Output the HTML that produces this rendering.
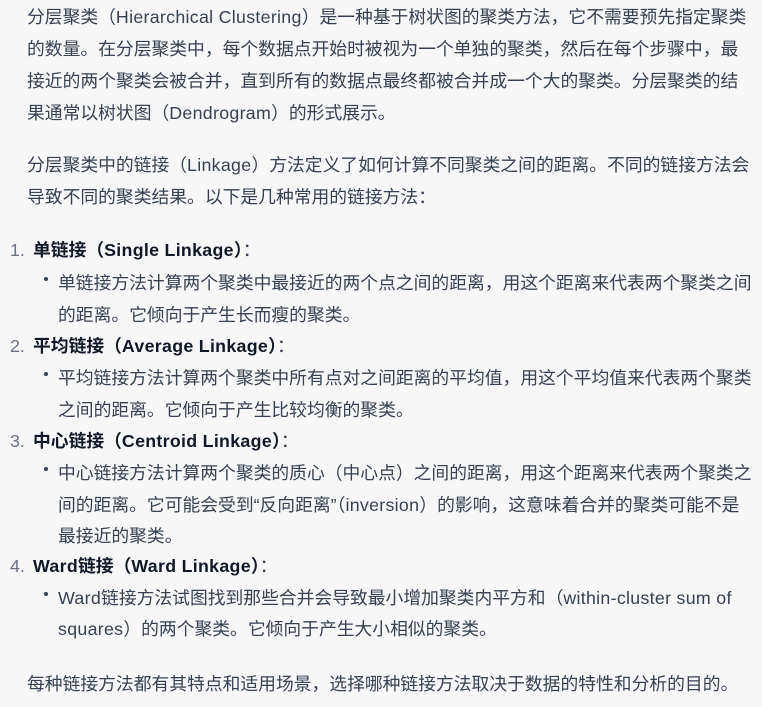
<!DOCTYPE html>
<html><head><meta charset="utf-8"><style>
html,body{margin:0;padding:0;background:#f7f7f8;}
body{width:762px;height:707px;position:relative;overflow:hidden;font-family:"Liberation Sans","Noto Sans CJK SC",sans-serif;font-size:17.8px;color:#374151;}
.l{position:absolute;white-space:nowrap;line-height:22px;}
b{font-weight:700;color:#111827;}
.n{color:#6b7280;}
.e{letter-spacing:0.3px;}
.d{position:absolute;width:4px;height:4px;border-radius:50%;background:#374151;}
</style></head><body>
<div class="l" style="left:27px;top:6px">分层聚类（<span class="e">Hierarchical Clustering</span>）是一种基于树状图的聚类方法，它不需要预先指定聚类</div>
<div class="l" style="left:27px;top:38px">的数量。在分层聚类中，每个数据点开始时被视为一个单独的聚类，然后在每个步骤中，最</div>
<div class="l" style="left:27px;top:70px">接近的两个聚类会被合并，直到所有的数据点最终都被合并成一个大的聚类。分层聚类的结</div>
<div class="l" style="left:27px;top:102px">果通常以树状图（<span class="e">Dendrogram</span>）的形式展示。</div>
<div class="l" style="left:27px;top:154px">分层聚类中的链接（<span class="e">Linkage</span>）方法定义了如何计算不同聚类之间的距离。不同的链接方法会</div>
<div class="l" style="left:27px;top:186px">导致不同的聚类结果。以下是几种常用的链接方法：</div>

<div class="l n" style="left:10px;top:239px">1.</div>
<div class="l" style="left:33px;top:239px"><b>单链接（<span class="e">Single Linkage</span>）</b>：</div>
<div class="d" style="left:44px;top:277px"></div>
<div class="l" style="left:58px;top:272px">单链接方法计算两个聚类中最接近的两个点之间的距离，用这个距离来代表两个聚类之间</div>
<div class="l" style="left:58px;top:304px">的距离。它倾向于产生长而瘦的聚类。</div>

<div class="l n" style="left:10px;top:335px">2.</div>
<div class="l" style="left:33px;top:335px"><b>平均链接（<span class="e">Average Linkage</span>）</b>：</div>
<div class="d" style="left:44px;top:372px"></div>
<div class="l" style="left:58px;top:367px">平均链接方法计算两个聚类中所有点对之间距离的平均值，用这个平均值来代表两个聚类</div>
<div class="l" style="left:58px;top:399px">之间的距离。它倾向于产生比较均衡的聚类。</div>

<div class="l n" style="left:10px;top:430px">3.</div>
<div class="l" style="left:33px;top:430px"><b>中心链接（<span class="e">Centroid Linkage</span>）</b>：</div>
<div class="d" style="left:44px;top:467px"></div>
<div class="l" style="left:58px;top:462px">中心链接方法计算两个聚类的质心（中心点）之间的距离，用这个距离来代表两个聚类之</div>
<div class="l" style="left:58px;top:494px">间的距离。它可能会受到“反向距离”（<span class="e">inversion</span>）的影响，这意味着合并的聚类可能不是</div>
<div class="l" style="left:58px;top:525px">最接近的聚类。</div>

<div class="l n" style="left:10px;top:555px">4.</div>
<div class="l" style="left:33px;top:555px"><b><span class="e">Ward</span>链接（<span class="e">Ward Linkage</span>）</b>：</div>
<div class="d" style="left:44px;top:592px"></div>
<div class="l" style="left:58px;top:587px"><span class="e">Ward</span>链接方法试图找到那些合并会导致最小增加聚类内平方和（<span class="e">within-cluster sum of</span></div>
<div class="l" style="left:58px;top:618px"><span class="e">squares</span>）的两个聚类。它倾向于产生大小相似的聚类。</div>

<div class="l" style="left:27px;top:673px">每种链接方法都有其特点和适用场景，选择哪种链接方法取决于数据的特性和分析的目的。</div>
</body></html>
